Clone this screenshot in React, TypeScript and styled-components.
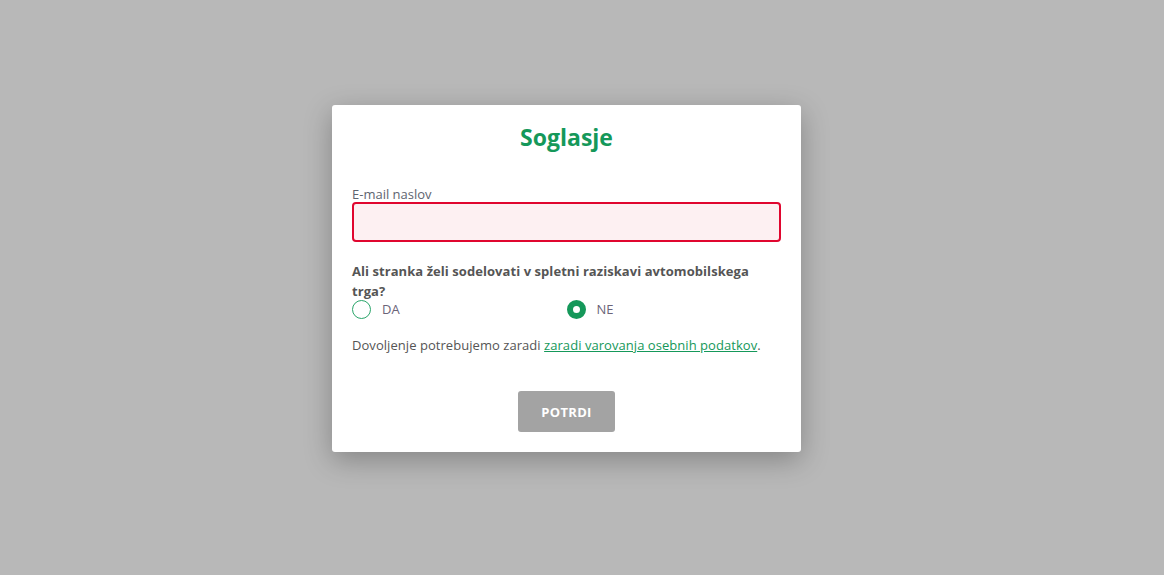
import styled, { createGlobalStyle } from 'styled-components';
import { useState } from 'react';

const GlobalStyle = createGlobalStyle`
  html, body {
    margin: 0;
    padding: 0;
    background: #b8b8b8;
  }
  body {
    font-family: "Open Sans", "Noto Sans", sans-serif;
  }
`;

const Backdrop = styled.div`
  width: 100%;
  height: 575px;
  display: flex;
  justify-content: center;
  align-items: flex-start;
  padding: 105px 31px 0 0;
  box-sizing: border-box;
`;

const Modal = styled.div`
  width: 469px;
  background: #fff;
  border-radius: 3px;
  box-shadow: 0 8px 28px rgba(0, 0, 0, 0.28);
  padding: 14px 20px 20px;
  box-sizing: border-box;
  display: flex;
  flex-direction: column;
`;

const Title = styled.h2`
  margin: 0;
  text-align: center;
  color: #15985a;
  font-size: 23px;
  font-weight: 700;
  line-height: 36px;
`;

const Label = styled.label`
  margin-top: 32px;
  font-size: 13px;
  line-height: 15px;
  color: #5e6470;
`;

const Input = styled.input`
  height: 40px;
  width: 100%;
  box-sizing: border-box;
  border: 2px solid #e0062f;
  border-radius: 4px;
  background: #fdf0f2;
  outline: none;
  font-family: inherit;
  font-size: 13px;
  padding: 0 10px;
`;

const Question = styled.p`
  margin: 19px 0 0;
  font-size: 13px;
  font-weight: 700;
  line-height: 20px;
  letter-spacing: 0.06px;
  color: #555;
  padding-right: 20px;
`;

const Options = styled.div`
  margin-top: -1px;
  display: grid;
  grid-template-columns: 1fr 1fr;
`;

const Option = styled.label`
  display: flex;
  align-items: center;
  gap: 11px;
  cursor: pointer;
  font-size: 13px;
  color: #6b6478;
  line-height: 19px;
`;

const Dot = styled.span<{ checked: boolean }>`
  width: 19px;
  height: 19px;
  box-sizing: border-box;
  border-radius: 50%;
  border: ${(p) => (p.checked ? '6.5px solid #15985a' : '1.5px solid #2aa56a')};
  background: #fff;
`;

const Note = styled.p`
  margin: 17px 0 0;
  font-size: 13px;
  line-height: 18px;
  letter-spacing: 0.05px;
  color: #555;
  a {
    color: #15985a;
    text-decoration: underline;
  }
`;

const Footer = styled.div`
  margin-top: 37px;
  display: flex;
  justify-content: center;
`;

const Button = styled.button`
  width: 97px;
  height: 41px;
  border: none;
  border-radius: 3px;
  background: #a3a3a3;
  color: #fff;
  font-family: inherit;
  font-size: 13px;
  font-weight: 700;
  letter-spacing: 0.3px;
  cursor: pointer;
`;

export default function App() {
  const [answer, setAnswer] = useState<'da' | 'ne'>('ne');
  return (
    <>
      <GlobalStyle />
      <Backdrop>
        <Modal>
          <Title>Soglasje</Title>
          <Label htmlFor="email">E-mail naslov</Label>
          <Input id="email" type="email" />
          <Question>Ali stranka želi sodelovati v spletni raziskavi avtomobilskega trga?</Question>
          <Options>
            <Option onClick={() => setAnswer('da')}>
              <Dot checked={answer === 'da'} />
              DA
            </Option>
            <Option onClick={() => setAnswer('ne')}>
              <Dot checked={answer === 'ne'} />
              NE
            </Option>
          </Options>
          <Note>
            Dovoljenje potrebujemo zaradi <a href="#">zaradi varovanja osebnih podatkov</a>.
          </Note>
          <Footer>
            <Button>POTRDI</Button>
          </Footer>
        </Modal>
      </Backdrop>
    </>
  );
}
